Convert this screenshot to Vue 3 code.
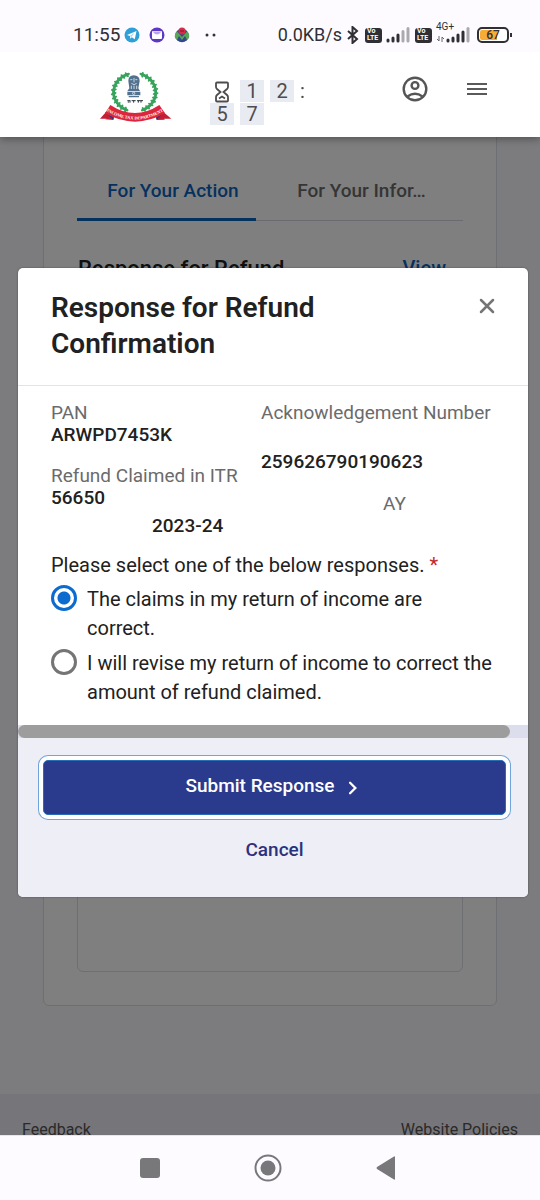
<script setup>
import { ref } from 'vue'

const response = ref('correct')
const options = [
  { value: 'correct', label: 'The claims in my return of income are correct.' },
  { value: 'revise', label: 'I will revise my return of income to correct the amount of refund claimed.' },
]

// Laurel leaves run along both sides of the emblem.
const leaves = []
for (let i = 0; i < 13; i++) {
  const a = ((-68 + i * 12) * Math.PI) / 180
  for (const side of [-1, 1]) {
    leaves.push({
      x: 134 + side * Math.cos(a) * 63,
      y: 94 + Math.sin(a) * 57,
      r: side * (i * 12 + 22),
    })
  }
}
const leavesShown = leaves.filter((l) => l.y < 148)
</script>

<template>
  <div class="screen">
    <div class="status">
      <div class="status-left">
        <span class="clock">11:55</span>
        <svg class="app-icon" viewBox="0 0 16 16"><circle cx="8" cy="8" r="7.500" fill="#2f9fd6" /><path d="M3 8l9.500-4-1.700 8.300-3-2.100-1.600 1.500-.2-2.600z" fill="#fff" /><path d="M6 9.100l4.500-3.400-3.200 4.200z" fill="#9cd0ea" /></svg>
        <svg class="app-icon" viewBox="0 0 16 16"><circle cx="8" cy="8" r="7.500" fill="#5c38c4" /><rect x="3" y="4" width="10" height="8" rx="1" fill="#fff" /><path d="M3.500 4.500q4.500 6 9 0z" fill="#b9a4ee" /></svg>
        <svg class="app-icon" viewBox="0 0 16 16"><circle cx="8" cy="8.500" r="6.800" fill="#34478a" /><path d="M1 11q-1-4 2-6.500L8 10l5-5.500q3 2.500 2 6.500l-2 2-2-4-3 4-3-4-2 4z" fill="#57a756" /><circle cx="8" cy="4" r="3.600" fill="#d72b48" /><path d="M7 3v2M9 3v2" stroke="#701b2c" stroke-width="1" /></svg>
        <svg class="dots" viewBox="0 0 12 4"><circle cx="2" cy="2" r="1.500" fill="#333" /><circle cx="9" cy="2" r="1.500" fill="#333" /></svg>
      </div>
      <div class="status-right">
        <span class="speed">0.0KB/s</span>
        <svg class="bluetooth" viewBox="0 0 12 18"><path d="M1 5l9 8-4.500 4V1L10 5l-9 8" fill="none" stroke="#303034" stroke-width="2" /></svg>
        <span class="volte"><span>Vo</span><span>LTE</span></span>
        <svg class="signal" viewBox="0 0 24 16"><path d="M2 13v1M7 11v3M12 8v6" stroke="#303034" stroke-width="3" stroke-linecap="round" /><path d="M17 4.500V14M22 1.500V14" stroke="#aaa9ae" stroke-width="3" stroke-linecap="round" /></svg>
        <span class="volte"><span>Vo</span><span>LTE</span></span>
        <span class="mobile">
          <span class="network">4G+</span>
          <svg class="signal-wide" viewBox="0 0 34 16"><path d="M3 9v5M1 12l2 2M6 15v-5l2 2" fill="none" stroke="#666" stroke-width="1" /><path d="M12 13v1M17 11v3M22 8v6M27 5v9" stroke="#303034" stroke-width="3" stroke-linecap="round" /><path d="M32 1.500V14" stroke="#aaa9ae" stroke-width="3" stroke-linecap="round" /></svg>
        </span>
        <span class="battery"><span>67</span></span>
      </div>
    </div>

    <header class="header">
      <a class="brand" href="#" aria-label="Income Tax Department">
        <svg class="logo" viewBox="24 24 222 162">
          <g fill="#38a35c">
            <ellipse v-for="(l, i) in leavesShown" :key="i" :cx="l.x" :cy="l.y" rx="10" ry="4.500" :transform="`rotate(${l.r} ${l.x} ${l.y})`" />
            <ellipse v-for="(l, i) in leavesShown" :key="'b' + i" :cx="l.x" :cy="l.y" rx="9" ry="3.500" :transform="`rotate(${l.r + 75} ${l.x} ${l.y})`" />
          </g>
          <g fill="#52718f">
            <path d="M115 60q0-16 16-17 18 1 18 17l-4 22 5 8h-38l6-8z" />
            <path d="M112 92h39v11h-39zM116 105h31v4h-31z" />
          </g>
          <g fill="none" stroke="#e3eaf1" stroke-width="2.500"><path d="M121 56h6M136 56h6M132 51v13M124 67q8 8 16 0M124 74v10M132 74v10M140 74v10" /><circle cx="131" cy="97" r="3.500" /></g>
          <path d="M112 119h9M125 119h12M141 119h18M115 121v4M120 119v6M131 119v6M145 119v6M153 119v6" stroke="#29343e" stroke-width="3" />
          <path d="M48 153L30 173h20l-5 2 25 2 2-15zM220 153l24 20h-22l3 3-25 1-2-15z" fill="#c51f36" />
          <path d="M45 153l25 23 3-14zM224 153l-24 23-4-14z" fill="#283a83" />
          <path d="M61 132Q135 180 208 132l17 25Q135 207 45 157z" fill="#dd263c" />
          <path id="ribbon-text" d="M48 149Q135 202 222 149" fill="none" />
          <text class="ribbon-label"><textPath href="#ribbon-text" startOffset="50%">INCOME TAX DEPARTMENT</textPath></text>
        </svg>
      </a>
      <div class="timer" role="timer">
        <svg class="hourglass" viewBox="0 0 14 22"><path d="M2 1.500h10q1 0 1 1V6q0 1-1 2L8.500 11l3.500 3q1 1 1 2v3.500q0 1-1 1H2q-1 0-1-1V16q0-1 1-2l3.500-3L2 8Q1 7 1 6V2.500q0-1 1-1zM4 17.500l3-2 3 2" fill="none" stroke="#4d4d4f" stroke-width="1.800" /></svg>
        <span class="digit">1</span>
        <span class="digit">2</span>
        <span class="colon">:</span>
        <span class="digit">5</span>
        <span class="digit">7</span>
      </div>
      <div class="actions">
        <button class="icon-button" type="button" aria-label="Profile">
          <svg class="profile" viewBox="0 0 26 26"><g fill="none" stroke="#555" stroke-width="2.400"><circle cx="13" cy="13" r="11.300" /><circle cx="13" cy="9.500" r="3.400" /><path d="M5.500 20.500q7.500-5.500 15 0" /></g></svg>
        </button>
        <button class="icon-button" type="button" aria-label="Menu">
          <svg class="menu" viewBox="0 0 20 14"><path d="M0 2h20M0 7h20M0 12h20" stroke="#5a5a5a" stroke-width="2" /></svg>
        </button>
      </div>
    </header>

    <main class="main">
      <section class="card">
        <div class="tabs" role="tablist">
          <button class="tab active" type="button" role="tab" aria-selected="true">For Your Action</button>
          <button class="tab" type="button" role="tab" aria-selected="false">For Your Infor…</button>
        </div>
        <div class="notice">
          <h2>Response for Refund</h2>
          <a href="#">View</a>
        </div>
        <div class="panel"></div>
      </section>
      <footer class="site-footer">
        <a href="#">Feedback</a>
        <a href="#">Website Policies</a>
      </footer>

      <div class="backdrop">
        <form class="dialog" role="dialog" aria-labelledby="dialog-title" @submit.prevent>
          <div class="dialog-head">
            <h1 id="dialog-title">Response for Refund Confirmation</h1>
            <button class="close" type="button" aria-label="Close">
              <svg viewBox="0 0 16 16"><path d="M2 2l12 12M14 2L2 14" stroke="#757575" stroke-width="2.500" stroke-linecap="round" /></svg>
            </button>
          </div>
          <div class="dialog-body">
            <div class="details">
              <div class="column">
                <span class="label">PAN</span>
                <span class="value">ARWPD7453K</span>
                <span class="label refund">Refund Claimed in ITR</span>
                <span class="value">56650</span>
                <span class="value year">2023-24</span>
              </div>
              <div class="column">
                <span class="label">Acknowledgement Number</span>
                <span class="value number">259626790190623</span>
                <span class="label ay">AY</span>
              </div>
            </div>
            <fieldset class="choices">
              <legend>Please select one of the below responses. <span class="required">*</span></legend>
              <label v-for="o in options" :key="o.value" class="choice">
                <input v-model="response" type="radio" name="response" :value="o.value" />
                <span>{{ o.label }}</span>
              </label>
            </fieldset>
          </div>
          <div class="scroll-track"><div class="scroll-thumb"></div></div>
          <div class="dialog-foot">
            <button class="submit" type="submit">
              Submit Response
              <svg viewBox="0 0 8 12"><path d="M1.500 1.500L6 6l-4.500 4.500" fill="none" stroke="#fff" stroke-width="2" stroke-linecap="round" /></svg>
            </button>
            <button class="cancel" type="button">Cancel</button>
          </div>
        </form>
      </div>
    </main>

    <nav class="system-nav">
      <button type="button" aria-label="Recent apps"><svg viewBox="0 0 28 28"><rect x="4" y="4" width="20" height="20" rx="3" fill="#787779" /></svg></button>
      <button type="button" aria-label="Home"><svg viewBox="0 0 28 28"><circle cx="14" cy="14" r="12.500" fill="none" stroke="#787779" stroke-width="2" /><circle cx="14" cy="14" r="7.500" fill="#787779" /></svg></button>
      <button type="button" aria-label="Back"><svg viewBox="0 0 28 28"><path d="M5 13L22 2.500q1-.5 1 .5v22q0 1-1 .5L5 15q-1-1 0-2z" fill="#787779" /></svg></button>
    </nav>
  </div>
</template>

<style>
body {
  margin: 0;
  background: #fdfbff;
}
</style>

<style scoped>
* {
  box-sizing: border-box;
}
.screen {
  display: flex;
  flex-direction: column;
  height: 100vh;
  overflow: hidden;
  font-family: Roboto, "Liberation Sans", sans-serif;
  font-size: 20px;
  line-height: 22px;
  color: #212121;
}
button {
  padding: 0;
  border: 0;
  background: none;
  font: inherit;
  color: inherit;
  cursor: pointer;
}
a {
  text-decoration: none;
}
svg {
  display: block;
  flex: none;
}

.status {
  position: relative;
  z-index: 3;
  display: flex;
  flex: none;
  justify-content: space-between;
  height: 52px;
  padding: 18px 31px 0 73px;
  background: #fdfbff;
  color: #303034;
}
.status-left,
.status-right {
  display: flex;
  align-items: center;
  height: 34px;
}
.clock {
  margin-right: 4px;
  font-size: 19px;
}
.speed {
  font-size: 18px;
}
.app-icon {
  width: 16px;
  height: 16px;
  margin-right: 9px;
}
.dots {
  width: 12px;
  height: 4px;
  margin-left: 6px;
}
.bluetooth {
  width: 12px;
  height: 18px;
  margin: 0 6px 0 5px;
}
.volte {
  display: flex;
  flex-direction: column;
  justify-content: center;
  width: 17px;
  height: 15px;
  border-radius: 3px;
  background: #303034;
  color: #fff;
  font-size: 7px;
  font-weight: 700;
  line-height: 7px;
  padding-left: 2px;
}
.signal {
  width: 24px;
  height: 16px;
  margin: 0 5px 0 4px;
}
.mobile {
  position: relative;
  margin: 0 7px 0 4px;
}
.network {
  position: absolute;
  left: 0;
  top: -5px;
  font-size: 10px;
  line-height: 10px;
}
.signal-wide {
  width: 34px;
  height: 16px;
}
.battery {
  position: relative;
  display: flex;
  align-items: center;
  justify-content: center;
  width: 32px;
  height: 16px;
  border: 2px solid #303034;
  border-radius: 5px;
  background: linear-gradient(90deg, #f8ac38 64%, #fff 64%);
  box-shadow: inset 0 0 0 1px #fff;
  font-size: 12px;
  font-weight: 500;
  line-height: 12px;
}
.battery::after {
  content: "";
  position: absolute;
  right: -5px;
  top: 4px;
  width: 2px;
  height: 4px;
  background: #303034;
}

.header {
  position: relative;
  z-index: 2;
  display: flex;
  flex: none;
  align-items: flex-start;
  height: 85px;
  padding: 17px 53px 0 98px;
  background: #fff;
  box-shadow: 0 2px 8px rgba(0, 0, 0, 0.35);
}
.logo {
  width: 74px;
  height: 54px;
}
.ribbon-label {
  fill: #fff;
  font-family: "Liberation Serif", serif;
  font-size: 13px;
  font-weight: 700;
  text-anchor: middle;
}
.timer {
  display: grid;
  grid-template-columns: 24px 24px 24px 10px;
  grid-auto-rows: 22px;
  gap: 1px 6px;
  margin: 11px 0 0 38px;
  color: #4d4d4f;
  text-align: center;
}
.digit {
  background: #e9ebf3;
}
.colon {
  text-align: left;
}
.hourglass {
  width: 14px;
  height: 22px;
  margin: 1px auto 0;
}
.actions {
  display: flex;
  align-items: center;
  gap: 39px;
  height: 40px;
  margin-left: auto;
}
.profile {
  width: 26px;
  height: 26px;
}
.menu {
  width: 20px;
  height: 14px;
}

.main {
  position: relative;
  flex: 1;
  min-height: 0;
  overflow: hidden;
  background: #f9f9fc;
}
.card {
  margin: -10px 43px 0;
  padding: 40px 33px 33px;
  border: 1px solid #dddee6;
  border-radius: 6px;
  background: #fff;
}
.tabs {
  display: flex;
  border-bottom: 1px solid #d5d6e0;
}
.tab {
  flex: 1;
  height: 53px;
  margin-bottom: -1px;
  padding-bottom: 7px;
  color: #6b6b6b;
  font-size: 19px;
  font-weight: 500;
}
.tab.active {
  flex: none;
  width: 179px;
  margin-right: 4px;
  padding: 0 0 4px 13px;
  border-bottom: 3px solid #0664bd;
  color: #0d63bd;
}
.notice {
  display: flex;
  justify-content: space-between;
  padding: 36px 17px 0 1px;
}
.notice h2 {
  margin: 0;
  font-size: 22px;
  font-weight: 500;
  line-height: 24px;
}
.notice a {
  color: #0d63bd;
  font-weight: 500;
}
.panel {
  height: 672px;
  margin-top: 19px;
  border: 1px solid #dddee6;
  border-radius: 6px;
}
.site-footer {
  display: flex;
  justify-content: space-between;
  margin-top: 88px;
  padding: 25px 22px;
  background: #edecf4;
  font-size: 16px;
}
.site-footer a {
  color: #555;
}

.backdrop {
  position: absolute;
  inset: 0;
  padding: 131px 12px 0 18px;
  background: rgba(0, 0, 0, 0.5);
}
.dialog {
  overflow: hidden;
  border-radius: 5px;
  background: #fff;
  box-shadow: 0 0 2px rgba(0, 0, 0, 0.4);
}
.dialog-head {
  display: flex;
  align-items: flex-start;
  justify-content: space-between;
  padding: 22px 33px 23px;
  border-bottom: 1px solid #e3e3e5;
}
.dialog-head h1 {
  max-width: 300px;
  margin: 0;
  font-size: 28px;
  font-weight: 600;
  line-height: 36px;
}
.close {
  margin-top: 8px;
}
.close svg {
  width: 16px;
  height: 16px;
}
.dialog-body {
  padding: 16px 33px 18px;
}
.details {
  display: grid;
  grid-template-columns: 210px 1fr;
  font-size: 19px;
}
.column {
  display: flex;
  flex-direction: column;
}
.label {
  color: #6b6b6b;
  white-space: nowrap;
}
.value {
  font-weight: 500;
}
.refund {
  margin-top: 19px;
}
.year {
  margin-top: 6px;
  padding-left: 101px;
}
.number {
  margin-top: 27px;
}
.ay {
  margin-top: 20px;
  padding-left: 122px;
}
.choices {
  margin: 17px 0 0;
  padding: 0;
  border: 0;
}
.choices legend {
  padding: 0 0 3px;
}
.required {
  color: #c62828;
}
.choice {
  display: flex;
  gap: 10px;
  margin-top: 6px;
  line-height: 29px;
}
.choice input {
  appearance: none;
  flex: none;
  width: 26px;
  height: 26px;
  margin: 0;
  border: 3px solid #757575;
  border-radius: 50%;
}
.choice input:checked {
  border-color: #0d6bd0;
  background: radial-gradient(circle, #0d6bd0 6px, transparent 7px);
}
.scroll-track {
  height: 13px;
  background: #dcdeec;
}
.scroll-thumb {
  height: 13px;
  margin-right: 18px;
  border-radius: 7px;
  background: #9d9d9d;
}
.dialog-foot {
  display: flex;
  flex-direction: column;
  padding: 22px 22px 36px 25px;
  background: #edeef6;
}
.submit {
  display: flex;
  align-items: center;
  justify-content: center;
  gap: 13px;
  height: 55px;
  padding: 0 6px 3px 0;
  border: 1px solid #2a6cb5;
  border-radius: 5px;
  background: #2a3a8c;
  box-shadow: 0 0 0 4px #fff, 0 0 0 5px #6fa5dc;
  color: #fff;
  font-size: 19px;
  font-weight: 500;
}
.submit svg {
  width: 10px;
  height: 14px;
  margin-top: 3px;
}
.cancel {
  align-self: center;
  margin-top: 24px;
  color: #2a3280;
  font-size: 19px;
  font-weight: 500;
}

.system-nav {
  display: flex;
  flex: none;
  align-items: center;
  justify-content: center;
  gap: 90px;
  height: 65px;
  padding-right: 4px;
  border-top: 1px solid #eee4e6;
  background: #fdfbff;
}
.system-nav svg {
  width: 28px;
  height: 28px;
}
</style>
